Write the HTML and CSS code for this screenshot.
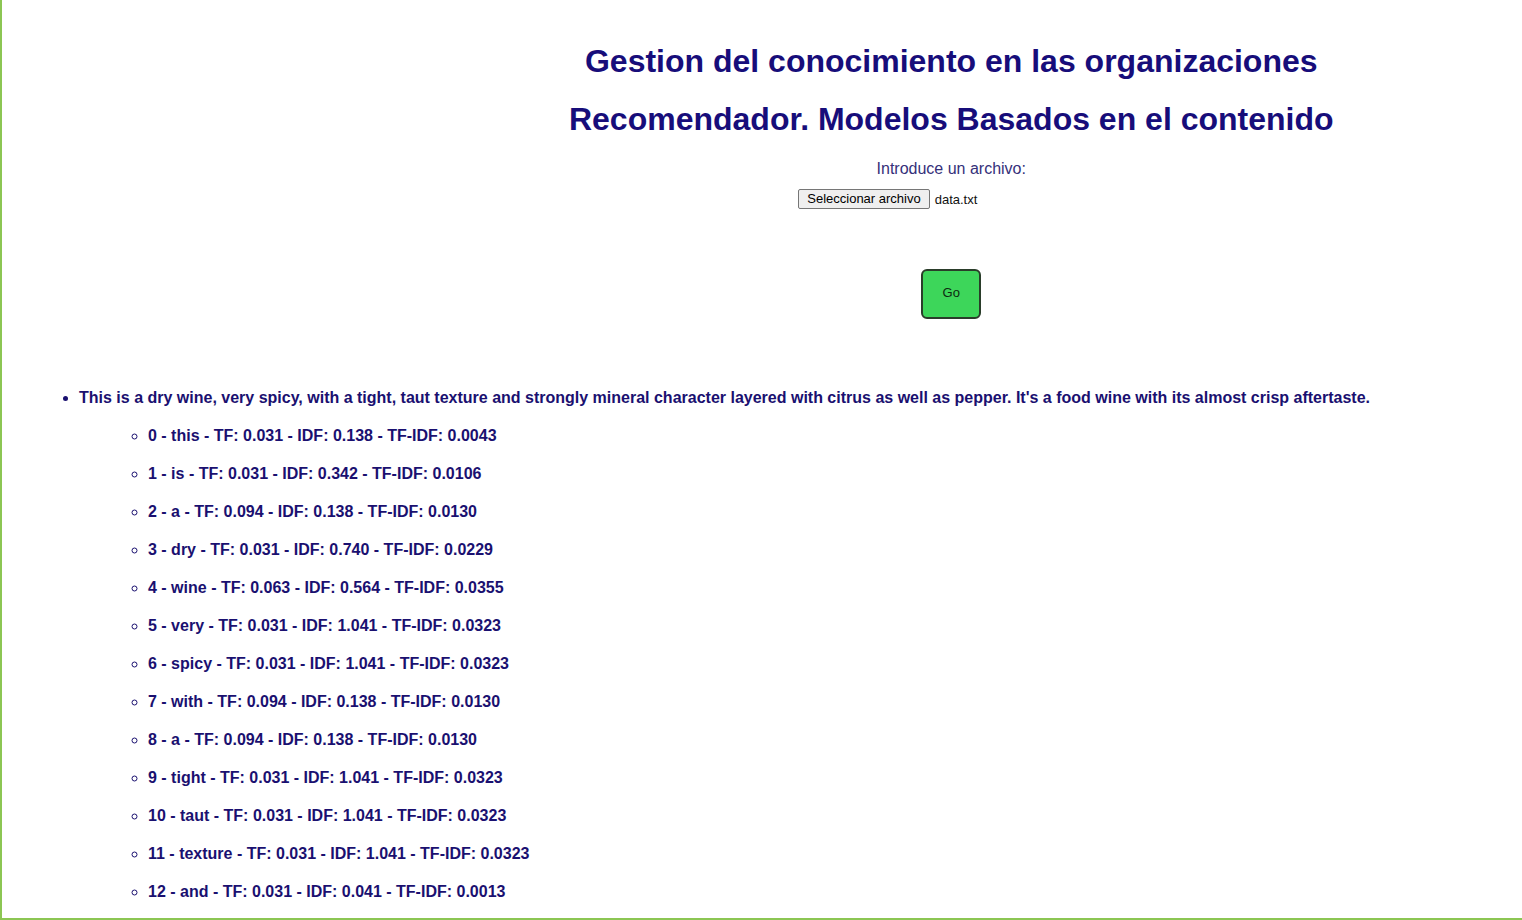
FILE: index.html
```html
<!DOCTYPE html>
<html lang="es">
<head>
<meta charset="utf-8">
<title>Recomendador</title>
<link rel="stylesheet" href="styles.css">
</head>
<body>
<div class="frame"></div>
<header class="header">
  <h1 class="title">Gestion del conocimiento en las organizaciones</h1>
  <h1 class="title title-second">Recomendador. Modelos Basados en el contenido</h1>
  <p class="label">Introduce un archivo:</p>
  <div class="file-row">
    <span class="file-btn">Seleccionar archivo</span>
    <span class="file-name">data.txt</span>
  </div>
  <button class="go" type="button">Go</button>
</header>
<ul class="docs">
  <li class="doc">This is a dry wine, very spicy, with a tight, taut texture and strongly mineral character layered with citrus as well as pepper. It's a food wine with its almost crisp aftertaste.
    <ul class="terms">
      <li>0 - this - TF: 0.031 - IDF: 0.138 - TF-IDF: 0.0043</li>
      <li>1 - is - TF: 0.031 - IDF: 0.342 - TF-IDF: 0.0106</li>
      <li>2 - a - TF: 0.094 - IDF: 0.138 - TF-IDF: 0.0130</li>
      <li>3 - dry - TF: 0.031 - IDF: 0.740 - TF-IDF: 0.0229</li>
      <li>4 - wine - TF: 0.063 - IDF: 0.564 - TF-IDF: 0.0355</li>
      <li>5 - very - TF: 0.031 - IDF: 1.041 - TF-IDF: 0.0323</li>
      <li>6 - spicy - TF: 0.031 - IDF: 1.041 - TF-IDF: 0.0323</li>
      <li>7 - with - TF: 0.094 - IDF: 0.138 - TF-IDF: 0.0130</li>
      <li>8 - a - TF: 0.094 - IDF: 0.138 - TF-IDF: 0.0130</li>
      <li>9 - tight - TF: 0.031 - IDF: 1.041 - TF-IDF: 0.0323</li>
      <li>10 - taut - TF: 0.031 - IDF: 1.041 - TF-IDF: 0.0323</li>
      <li>11 - texture - TF: 0.031 - IDF: 1.041 - TF-IDF: 0.0323</li>
      <li>12 - and - TF: 0.031 - IDF: 0.041 - TF-IDF: 0.0013</li>
    </ul>
  </li>
</ul>
</body>
</html>
```

FILE: styles.css
```css
html, body {
  margin: 0;
  padding: 0;
  background: #ffffff;
}

body {
  font-family: "Liberation Sans", Arial, sans-serif;
  color: #1a1070;
}

.frame {
  position: fixed;
  left: 0;
  top: 0;
  right: 0;
  bottom: 0;
  border-left: 2px solid #8cc653;
  border-bottom: 2px solid #8cc653;
  pointer-events: none;
}

.header {
  margin-left: 25%;
  text-align: center;
  padding-top: 42px;
}

.title {
  margin: 0;
  font-size: 32px;
  line-height: 38px;
  font-weight: bold;
  color: #170d7a;
}

.title-second {
  margin-top: 20px;
}

.label {
  margin: 21px 0 0;
  font-size: 16px;
  line-height: 20px;
  color: #35307a;
}

.file-row {
  margin: 10px auto 0;
  width: 306px;
  display: flex;
  justify-content: flex-start;
  align-items: center;
  gap: 5px;
  font-size: 13px;
  height: 20px;
}

.file-btn {
  display: inline-block;
  border: 1px solid #767676;
  border-radius: 2px;
  background: #efefef;
  color: #000;
  padding: 1px 8px;
  line-height: 16px;
  font-size: 13px;
}

.file-name {
  color: #111;
  font-size: 13px;
}

.go {
  display: block;
  margin: 60px auto 0;
  width: 60px;
  height: 50px;
  background: #3dd65a;
  border: 2px solid #2a3d2a;
  border-radius: 6px;
  font-family: "Liberation Sans", Arial, sans-serif;
  font-size: 13px;
  line-height: 14px;
  color: #0d2a10;
  padding: 0 0 3px;
}

.docs {
  margin: 60px 0 0;
  padding-left: 79px;
  font-size: 16px;
  font-weight: bold;
  line-height: 18px;
}

.docs li {
  padding: 10px 0;
}

.terms {
  margin: 10px 0 0;
  padding-left: 69px;
  list-style-type: circle;
}
```
